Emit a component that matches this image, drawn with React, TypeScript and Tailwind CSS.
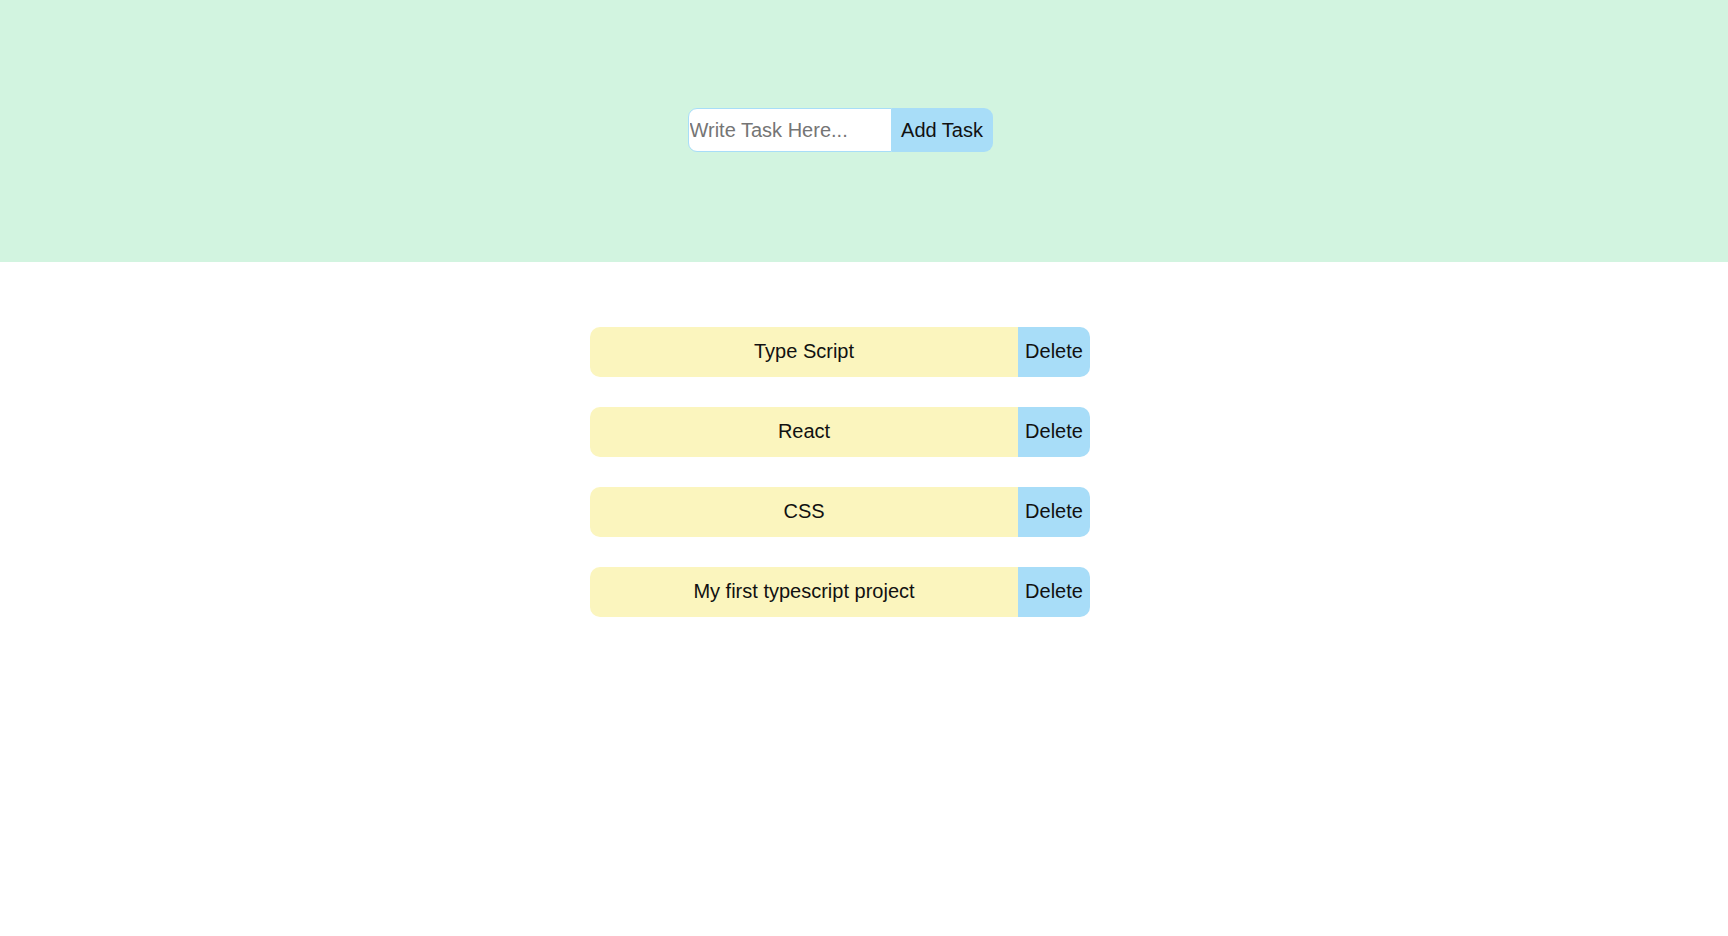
import { useState } from "react";

const initialTasks = ["Type Script", "React", "CSS", "My first typescript project"];

export default function App() {
    const [tasks, setTasks] = useState<string[]>(initialTasks);
    const [text, setText] = useState("");

    const addTask = () => {
        if (!text.trim()) return;
        setTasks([...tasks, text.trim()]);
        setText("");
    };

    return (
        <div className="min-h-screen bg-white font-['Liberation_Sans',Arial,sans-serif] text-[20px] text-[#111]">
            {/* Header */}
            <div className="h-[262px] bg-[#d2f4e0] pt-[108px] pr-12 flex justify-center">
                <div className="flex h-[44px]">
                    <input
                        value={text}
                        onChange={(e) => setText(e.target.value)}
                        placeholder="Write Task Here..."
                        className="w-[204px] h-full bg-white border border-[#a8ddf8] rounded-l-[9px] px-[1px] outline-none placeholder:text-[#757575]"
                    />
                    <button
                        onClick={addTask}
                        className="w-[101px] h-full bg-[#a8ddf8] rounded-r-[9px]"
                    >
                        Add Task
                    </button>
                </div>
            </div>

            {/* Task list */}
            <div className="pt-[65px] pr-12 flex flex-col items-center gap-[30px]">
                {tasks.map((task, i) => (
                    <div key={i} className="flex w-[500px] h-[50px] rounded-[10px] overflow-hidden">
                        <div className="flex-1 bg-[#fbf5be] flex items-center justify-center pb-[3px]">{task}</div>
                        <button
                            onClick={() => setTasks(tasks.filter((_, j) => j !== i))}
                            className="w-[72px] bg-[#a8ddf8] pb-[3px]"
                        >
                            Delete
                        </button>
                    </div>
                ))}
            </div>
        </div>
    );
}
